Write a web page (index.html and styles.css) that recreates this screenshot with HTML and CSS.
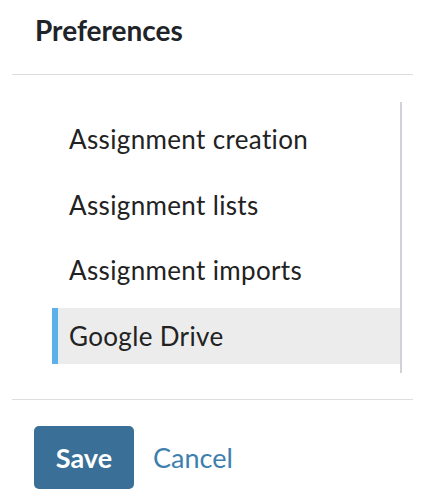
FILE: index.html
```html
<!DOCTYPE html>
<html>
<head>
<meta charset="utf-8">
<link rel="stylesheet" href="styles.css">
</head>
<body>
<div class="dialog">
  <header class="header"><h1 class="title">Preferences</h1></header>
  <div class="body">
    <nav class="menu">
      <div class="item">Assignment creation</div>
      <div class="item">Assignment lists</div>
      <div class="item">Assignment imports</div>
      <div class="item active">Google Drive</div>
    </nav>
  </div>
  <footer class="footer">
    <button class="btn-save">Save</button>
    <a class="btn-cancel">Cancel</a>
  </footer>
</div>
</body>
</html>
```
FILE: styles.css
```css
html, body { margin: 0; padding: 0; background: #fff; }
body { font-family: Lato, "Noto Sans", sans-serif; color: #2d3b45; width: 427px; height: 500px; overflow: hidden; }
.dialog { padding: 0 14px 0 12px; }
.header { height: 75px; border-bottom: 1px solid #dcdfe2; box-sizing: border-box; padding: 13px 0 0 23px; }
.title { margin: 0; font-size: 28px; font-weight: 700; line-height: 34px; color: #202429; }
.body { padding: 27px 0 26px 40px; border-bottom: 1px solid #dcdfe2; }
.menu { border-right: 2px solid #cfd2d6; margin-right: 11px; padding: 9px 0 9px; display: flex; flex-direction: column; gap: 9.5px; }
.item { height: 56px; display: flex; align-items: center; padding-left: 11px; font-size: 26px; letter-spacing: 0.35px; color: #222; border-left: 6px solid transparent; }
.item.active { background: #ececec; border-left-color: #5cb0ea; }
.footer { display: flex; align-items: center; padding: 26px 0 0 22px; gap: 19px; }
.btn-save { width: 100px; height: 63px; border: none; border-radius: 5px; background: #3a6f98; color: #fff; font-family: inherit; font-size: 27px; font-weight: 700; padding: 0; }
.btn-cancel { font-size: 27px; color: #3f7fae; }
```
